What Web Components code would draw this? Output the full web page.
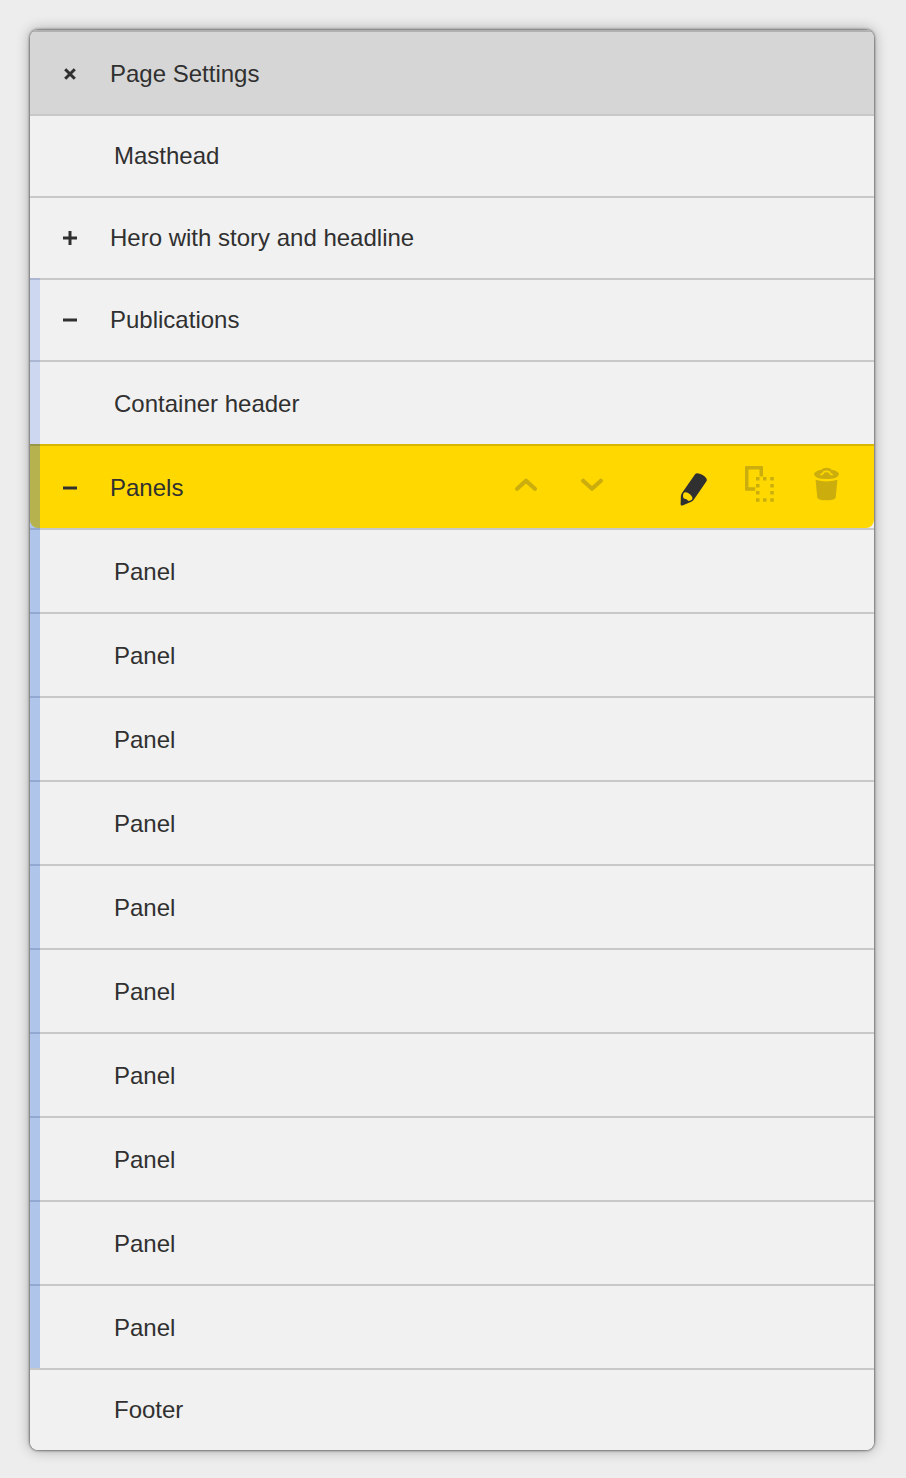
<!DOCTYPE html>
<html lang="en">
<head>
<meta charset="utf-8">
<title>Page Settings</title>
<style>
html, body { margin: 0; background: #ededed; }
body { height: 1478px; overflow: hidden; font-family: "Liberation Sans", Arial, sans-serif; font-size: 24px; color: #303030; }
</style>
</head>
<body>
<page-tree></page-tree>

<script>
const SVG = {
  close: '<svg width="16" height="16" viewBox="0 0 16 16" fill="none" stroke="#303030" stroke-width="3"><path d="M3.200 3.200 12.800 12.800M12.800 3.200 3.200 12.800"/></svg>',
  plus: '<svg width="16" height="16" viewBox="0 0 16 16" fill="#303030"><path d="M1 6.500h5.500V1h3v5.500H15v3H9.500V15h-3V9.500H1z"/></svg>',
  minus: '<svg width="16" height="16" viewBox="0 0 16 16" fill="#303030"><path d="M1 6.500h14v3H1z"/></svg>',
  up: '<svg width="24" height="16" viewBox="0 0 24 16" fill="none" stroke="#cbae0d" stroke-width="4.200" stroke-linecap="round" stroke-linejoin="round"><path d="M3.100 11.800 12 3.800 20.900 11.800"/></svg>',
  down: '<svg width="24" height="16" viewBox="0 0 24 16" fill="none" stroke="#cbae0d" stroke-width="4.200" stroke-linecap="round" stroke-linejoin="round"><path d="M3.100 3.800 12 11.800 20.900 3.800"/></svg>',
  edit: '<svg width="30" height="36" viewBox="0 0 30 36"><path fill="#303030" d="M14.900 3.400Q15.900 2.100 17.500 2.200 24 3.200 26.600 7.800 27.300 9.200 26.300 10.600L14.100 28.300Q13 30 11.300 30.700L2.500 34.500Q.500 35 .600 33L.900 25.200Q1 23.500 2 22Z"/><path fill="#ffd800" d="M3.600 22Q5 20.800 7 21.600 11.300 23.300 12.500 27 12.300 29 10.500 29.500L8.600 29.900Q7.600 29.700 6.500 28.300L3.900 27.400Q2.800 26.600 3 24.500Z"/></svg>',
  copy: '<svg width="30" height="38" viewBox="0 0 30 38" fill="#cbae0d"><path d="M1 1H17q1 0 1 1v9.500h-3.500V4.500H3.500v17.700H10.200V25.700H1q-1 0-1-1V2q0-1 1-1z"/><path d="M11 12h3.500v3.500H11zM18 12h3.500v3.500H18zM25.300 12h3.500v3.500h-3.500zM11 19h3.500v3.500H11zM25.300 19h3.500v3.500h-3.500zM11 26h3.500v3.500H11zM25.300 26h3.500v3.500h-3.500zM11 33.200h3.500v3.500H11zM18 33.200h3.500v3.500H18zM25.300 33.200h3.500v3.500h-3.500z"/></svg>',
  trash: '<svg width="26" height="36" viewBox="0 0 26 36" fill="#cbae0d"><path d="M8.300 2.800Q9.800 .7 13.500 .7T18.700 2.800Q26 4.300 26 7.500 24.500 12 13.500 12T1 7.500Q1 4.300 8.300 2.800z"/><path fill="none" stroke="#ffd800" stroke-width="1.700" stroke-linecap="round" d="M8 7.600Q10 6.800 11 4.800 13.500 4 16 4.800 17 6.800 19 7.600"/><path d="M2.600 12.700Q13.500 16.200 24.400 12.700L22.700 30.700Q21 33.300 13.500 33.300T4.300 30.700Z"/></svg>'
};

class TreeIcon extends HTMLElement {
  connectedCallback() {
    const root = this.attachShadow({ mode: "open" });
    root.innerHTML = `<style>:host{display:block;flex:none}svg{display:block}</style>${SVG[this.getAttribute("name")]}`;
  }
}

class RowActions extends HTMLElement {
  connectedCallback() {
    this.attachShadow({ mode: "open" }).innerHTML = `
      <style>
        :host { display: flex; align-items: flex-start; margin-left: auto; padding-right: 35px; }
        .up, .down { margin-top: 31px; }
        .down { margin-left: 42px; }
        .edit { margin: 25px 0 0 76px; }
        .copy { margin: 19px 0 0 35px; }
        .trash { margin: 21px 0 0 38px; }
      </style>
      <tree-icon class="up" name="up"></tree-icon>
      <tree-icon class="down" name="down"></tree-icon>
      <tree-icon class="edit" name="edit"></tree-icon>
      <tree-icon class="copy" name="copy"></tree-icon>
      <tree-icon class="trash" name="trash"></tree-icon>`;
  }
}

class TreeRow extends HTMLElement {
  connectedCallback() {
    const icon = this.getAttribute("icon");
    this.attachShadow({ mode: "open" }).innerHTML = `
      <style>
        :host { display: block; box-sizing: border-box; height: 82px; border-top: 2px solid #c8c8c8; background: #f1f1f1; }
        :host([tall]) { height: 84px; }
        :host([heading]) { background: #d6d6d6; border-top-color: #b0b0b0; }
        :host([level="1"]) { background: linear-gradient(to right, #cdd8f0 10px, #f1f1f1 10px); border-image: linear-gradient(to right, #abb7d2 10px, #c8c8c8 10px) 2 0 0 0; }
        :host([level="2"]) { background: linear-gradient(to right, #b0c5ea 10px, #f1f1f1 10px); border-image: linear-gradient(to right, #92a8d0 10px, #c8c8c8 10px) 2 0 0 0; }
        :host([active]) { border-image: linear-gradient(to right, #999746 10px, #d7b604 10px) 2 0 0 0; }
        .content { display: flex; height: 100%; box-sizing: border-box; }
        :host([active]) .content { background: linear-gradient(to right, #b6b34f 10px, #ffd800 10px); border-radius: 0 0 8px 8px; }
        .toggle { width: 80px; padding: 32px 0 0 32px; box-sizing: border-box; flex: none; }
        .leaf { width: 84px; flex: none; }
        .label { line-height: 28px; margin-top: 26px; white-space: nowrap; }
        :host([tall]) .label { margin-top: 28px; }
        :host([tall]) .toggle { padding-top: 34px; }
      </style>
      <div class="content">
        ${icon ? `<div class="toggle"><tree-icon name="${icon}"></tree-icon></div>` : '<div class="leaf"></div>'}
        <div class="label"><slot></slot></div>
        <slot name="actions"></slot>
      </div>`;
  }
}

class PageTree extends HTMLElement {
  connectedCallback() {
    const panels = '<tree-row tall level="2">Panel</tree-row>'.repeat(10);
    this.attachShadow({ mode: "open" }).innerHTML = `
      <style>
        :host { display: block; padding: 30px 32px 28px 30px; }
        .shell { border-radius: 8px; overflow: hidden; box-shadow: 0 0 3px rgba(0,0,0,.85), 0 0 14px rgba(0,0,0,.32); }
      </style>
      <div class="shell">
        <tree-row tall heading icon="close">Page Settings</tree-row>
        <tree-row>Masthead</tree-row>
        <tree-row icon="plus">Hero with story and headline</tree-row>
        <tree-row level="1" icon="minus">Publications</tree-row>
        <tree-row tall level="1">Container header</tree-row>
        <tree-row tall level="2" active icon="minus">Panels<row-actions slot="actions"></row-actions></tree-row>
        ${panels}
        <tree-row>Footer</tree-row>
      </div>`;
  }
}

customElements.define("tree-icon", TreeIcon);
customElements.define("row-actions", RowActions);
customElements.define("tree-row", TreeRow);
customElements.define("page-tree", PageTree);
</script>
</body>
</html>
